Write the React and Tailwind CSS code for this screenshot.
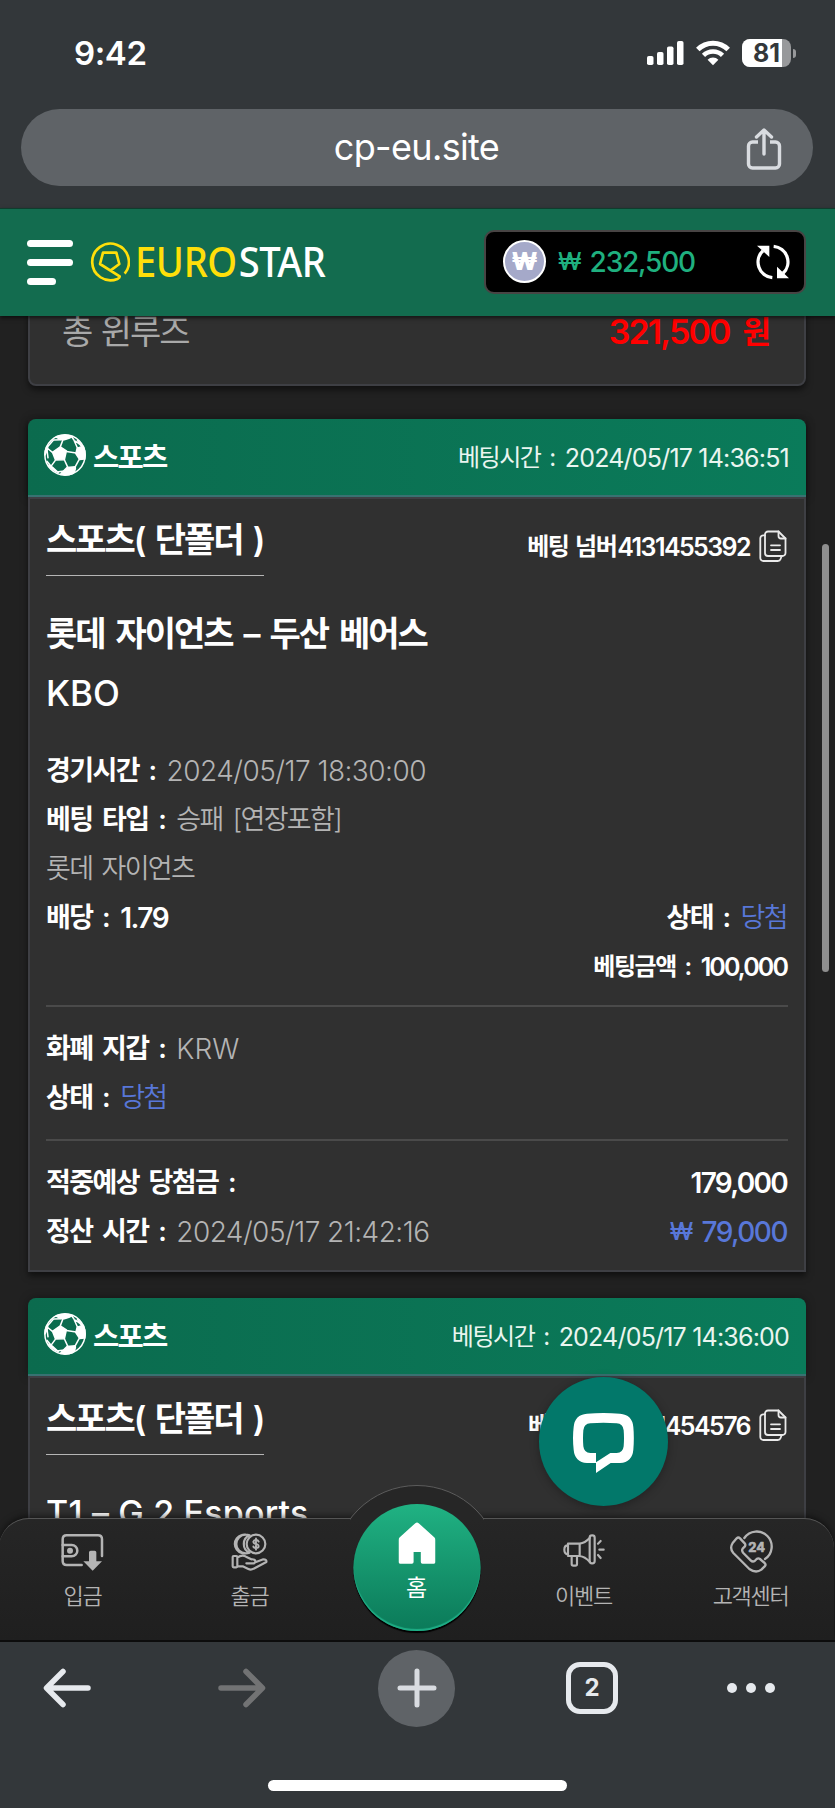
import React from 'react';

function SoccerBall() {
  return (
    <svg className="size-[42px] shrink-0" viewBox="0 0 124 124" fill="none" stroke="#fff" strokeWidth="4.5" strokeLinejoin="round">
      <circle cx="62" cy="62" r="59.5" />
      <path fill="#fff" d="M48 38 66 50 60 76 34 77 25 54Z" />
      <path fill="#fff" d="M36 9 Q60 -1 84 8 Q72 15 60 17 Q48 18 36 9Z" />
      <path fill="#fff" d="M98 42 116 36 Q124 56 120 74 L105 75 94 58Z" />
      <path fill="#fff" d="M68 99 92 97 Q95 108 84 117 Q66 124 50 117Z" />
      <path fill="#fff" d="M8 38 Q3 50 3 62 L9 48 12 34Z" />
      <path fill="#fff" d="M14 92 25 98 42 114 Q24 106 14 92Z" />
      <path d="M48 38 56 17M66 52 95 56M60 76 71 100M34 77 21 95M25 54 10 42M82 9 88 17 99 42M104 75 92 97M98 18 115 38M8 40 12 72 M92 20 Q108 30 116 42M40 112 Q56 108 70 112M52 17 28 18 12 36M21 95 8 80" />
    </svg>
  );
}

function CopyIcon() {
  return (
    <svg className="h-[32px] w-[28px] shrink-0" viewBox="0 0 28 32" fill="none" stroke="#eaeaea" strokeWidth="1.8" strokeLinecap="round" strokeLinejoin="round">
      <path d="M9 1.5h10.5l7 7V23a3 3 0 0 1-3 3H9a3 3 0 0 1-3-3V4.5a3 3 0 0 1 3-3Z" />
      <path d="M19.5 1.5V6a2.5 2.5 0 0 0 2.500 2.500h4.500M12 15.300h9M12 20h9" />
      <path d="M6 5.300H4.300a3 3 0 0 0-3 3V28a3 3 0 0 0 3 3h14.500a3 3 0 0 0 2.800-2L22.500 26.500" />
    </svg>
  );
}

function StatusBar() {
  return (
    <div className="flex h-[109px] items-start justify-between pt-[34px] pr-[39px] pl-[74px]">
      <span className="text-[33px] leading-[38px] font-semibold tracking-[-0.4px]">9:42</span>
      <div className="mt-[1px] flex h-[36px] items-center">
        <svg className="h-[24px] w-[37px]" viewBox="0 0 37 24" fill="#fff">
          <rect x="0" y="15" width="6.5" height="9" rx="1.800" />
          <rect x="10" y="11" width="6.500" height="13" rx="1.800" />
          <rect x="20" y="5.500" width="6.500" height="18.500" rx="1.800" />
          <rect x="30" y="0" width="6.500" height="24" rx="1.800" />
        </svg>
        <svg className="ml-[12px] h-[26px] w-[34px]" viewBox="0 0 34 26" fill="none" stroke="#fff" strokeWidth="5">
          <path d="M1.800 9.500a21.500 21.500 0 0 1 30.400 0" />
          <path d="M7.500 15.400a13.500 13.500 0 0 1 19 0" strokeWidth="4.600" />
          <path d="M17 25.300 11.600 19.800a7.700 7.700 0 0 1 10.800 0Z" fill="#fff" stroke="none" />
        </svg>
        <div className="ml-[12px] flex h-[28px] w-[49px] overflow-hidden rounded-[8px] bg-[#98999b]">
          <span className="flex w-[40px] items-center justify-end bg-white pr-[2px] text-[25px] leading-none font-bold text-[#33373a]">81</span>
        </div>
        <div className="ml-[2px] h-[9px] w-[3px] rounded-r-full bg-[#98999b]" />
      </div>
    </div>
  );
}

function AddressBar() {
  return (
    <div className="mr-[22px] ml-[21px] flex h-[77px] items-center rounded-full bg-[#5f6367] pr-[31px] pl-[66px]">
      <span className="flex-1 pb-[2px] text-center text-[36px] leading-[44px] font-normal tracking-[-0.66px]">cp-eu.site</span>
      <svg className="mt-[2px] h-[42px] w-[36px]" viewBox="0 0 36 42" fill="none" stroke="#d9dce0" strokeWidth="3.400" strokeLinecap="round" strokeLinejoin="round">
        <path d="M12 14H6.500a4 4 0 0 0-4 4v18a4 4 0 0 0 4 4h23a4 4 0 0 0 4-4V18a4 4 0 0 0-4-4H24" strokeLinecap="butt" />
        <path d="M18 26V2.500M10.500 9 18 2l7.500 7" />
      </svg>
    </div>
  );
}

function SiteHeader() {
  return (
    <header className="relative z-10 flex h-[108px] items-center border-t border-[#0f3d2d] bg-[#136c4f] pr-[29px] pb-[2px] pl-[27px] shadow-[0_2px_4px_rgba(0,0,0,0.6)]">
      <div className="flex flex-col gap-[12px] pt-[1px]">
        <div className="h-[7px] w-[46px] rounded-full bg-white" />
        <div className="h-[7px] w-[46px] rounded-full bg-white" />
        <div className="h-[7px] w-[29px] rounded-full bg-white" />
      </div>
      <svg className="ml-[17px] h-[40px] w-[40px]" viewBox="0 0 120 120" fill="none" stroke="#ffdf0a" strokeWidth="8" strokeLinejoin="round">
        <path d="M104 95 A55 55 0 1 0 82 111 Q90 107 89 103 L30 66 39 32 79 32 88 66 62 85" />
      </svg>
      <span className="ml-[5px] flex origin-left scale-x-[0.93] pb-[1px] font-['Noto_Sans',sans-serif] text-[41px] leading-[48px] font-medium text-white">
        <span className="tracking-[-0.4px] text-[#ffdf0a]">EURO</span>
        <span className="ml-[2px] tracking-[-0.6px]">STAR</span>
      </span>
      <div className="ml-auto flex h-[64px] w-[322px] shrink-0 items-center rounded-[10px] border-2 border-[#484444] bg-black pr-[13px] pl-[17px]">
        <div className="flex size-[43px] items-center justify-center rounded-full border-2 border-white bg-[#a5a9c9] text-[24px] font-black">₩</div>
        <span className="ml-[12px] text-[24px] font-medium text-[#1fb07f]">₩</span>
        <span className="ml-[8px] text-[28px] font-medium tracking-[-1.18px] text-[#1fb07f]">232,500</span>
        <svg className="ml-auto h-[36px] w-[36px]" viewBox="0 0 108 108" fill="none" stroke="#fff" strokeWidth="10">
          <path d="M52 101 A47 47 0 0 1 24 20" />
          <path d="M56 7 A47 47 0 0 1 84 88" />
          <path d="M6 5h37v34Z M102 103H66V68Z" fill="#fff" stroke="none" />
        </svg>
      </div>
    </header>
  );
}

function CardHeader({ time }) {
  return (
    <div className="flex h-[78px] items-center rounded-t-[8px] border-b-2 border-[#387272] bg-linear-to-r from-[#0b6b4e] to-[#0a7b5a] pr-[17px] pl-[16px] shadow-[0_0_10px_rgba(0,0,0,0.35)]">
      <div className="pb-[4px]"><SoccerBall /></div>
      <span className="ml-[7px] pt-[1px] text-[28.5px] leading-[40px] font-semibold tracking-[-1.7px]">스포츠</span>
      <span className="ml-auto pt-[1px] text-[24px] leading-[40px] font-normal tracking-[-1.44px] [word-spacing:3.5px] text-[#eaf5f0]">베팅시간 :</span>
      <span className="ml-[10px] pt-[1px] text-[25px] leading-[40px] font-normal tracking-[-0.8px] text-[#eaf5f0]">{time}</span>
    </div>
  );
}

function CardTitle({ number }) {
  return (
    <div className="flex items-start justify-between">
      <div className="h-[60px] w-[218px] border-b border-[#b5b5b5] text-[34px] leading-[48px] font-semibold tracking-[-2.04px] whitespace-nowrap [word-spacing:3.8px]">스포츠( 단폴더 )</div>
      <div className="flex h-[60px] items-center text-[25px] leading-[40px] font-semibold">
        <span className="pt-[1px] text-[24px] tracking-[-1.44px] [word-spacing:2px]">베팅 넘버</span>
        <span className="ml-[1px] pt-[1px] tracking-[-1.58px]">{number}</span>
        <div className="mr-[1px] ml-[9px]"><CopyIcon /></div>
      </div>
    </div>
  );
}

function Row({ children }) {
  return <div className="flex h-[49px] items-center justify-between leading-[40px]">{children}</div>;
}

function Pair({ children }) {
  return <div className="mr-[1px] flex items-center gap-[11px]">{children}</div>;
}

function Label({ children }) {
  return <span className="text-[27px] font-semibold tracking-[-1.62px] [word-spacing:4.5px]">{children}</span>;
}

function Value({ children }) {
  return <span className="text-[28px] font-[350] tracking-[-0.54px] text-[#b4b4b4]">{children}</span>;
}

function Won() {
  return <span className="text-[27px] font-[350] tracking-[-1.62px] text-[#5877d8]">당첨</span>;
}

function BetCard() {
  return (
    <section className="shadow-[0_4px_6px_rgba(0,0,0,0.5)]">
      <CardHeader time="2024/05/17 14:36:51" />
      <div className="h-[775px] border-2 border-[#3e3f44] bg-[#303030] px-[16px] pt-[17px]">
        <CardTitle number="4131455392" />
        <h2 className="mt-[28px] h-[60px] text-[34px] leading-[60px] font-semibold tracking-[-2.04px] [word-spacing:4.5px]">롯데 자이언츠 – 두산 베어스</h2>
        <h3 className="h-[60px] text-[35px] leading-[59px] font-medium">KBO</h3>
        <div className="mt-[22px]">
          <Row><Pair><Label>경기시간 :</Label><Value>2024/05/17 18:30:00</Value></Pair></Row>
          <Row><Pair><Label>베팅 타입 :</Label><span className="text-[27px] font-[350] tracking-[-1.62px] [word-spacing:4px] text-[#b4b4b4]">승패 [연장포함]</span></Pair></Row>
          <Row><span className="text-[27px] font-[350] tracking-[-1.62px] [word-spacing:3px] text-[#b4b4b4]">롯데 자이언츠</span></Row>
          <Row>
            <Pair><Label>배당 :</Label><span className="text-[28px] font-semibold tracking-[-1.5px]">1.79</span></Pair>
            <Pair><Label>상태 :</Label><Won /></Pair>
          </Row>
          <div className="mr-[1px] flex h-[49px] items-center justify-end leading-[40px] font-semibold">
            <span className="text-[24px] tracking-[-1.44px] [word-spacing:4px]">베팅금액 :</span>
            <span className="ml-[10px] text-[25px] tracking-[-1.9px]">100,000</span>
          </div>
        </div>
        <div className="mt-[14px] h-[2px] bg-[#4a4a4a]" />
        <div className="mt-[17px]">
          <Row><Pair><Label>화폐 지갑 :</Label><span className="text-[28px] font-[350] tracking-[0.1px] text-[#b4b4b4]">KRW</span></Pair></Row>
          <Row><Pair><Label>상태 :</Label><Won /></Pair></Row>
        </div>
        <div className="mt-[17px] h-[2px] bg-[#4a4a4a]" />
        <div className="mt-[17px]">
          <Row>
            <Label>적중예상 당첨금 :</Label>
            <span className="mr-[1px] text-[28px] font-semibold tracking-[-1.7px]">179,000</span>
          </Row>
          <Row>
            <Pair><Label>정산 시간 :</Label><Value>2024/05/17 21:42:16</Value></Pair>
            <div className="mr-[1px] flex items-center font-medium text-[#5877d8]">
              <span className="text-[24px]">₩</span>
              <span className="ml-[8px] text-[28px] tracking-[-1.5px]">79,000</span>
            </div>
          </Row>
        </div>
      </div>
    </section>
  );
}

function NextBetCard() {
  return (
    <section className="mt-[26px]">
      <CardHeader time="2024/05/17 14:36:00" />
      <div className="h-[400px] border-2 border-[#3e3f44] bg-[#303030] px-[16px] pt-[17px]">
        <CardTitle number="4131454576" />
        <h2 className="mt-[28px] h-[60px] text-[34px] leading-[60px] font-medium tracking-[0.18px]">T1 – G 2 Esports</h2>
      </div>
    </section>
  );
}

function DepositIcon() {
  return (
    <svg className="h-[38px] w-[43px]" viewBox="0 0 129 114" fill="none" stroke="#b4b4b4" strokeWidth="7.5" strokeLinecap="round" strokeLinejoin="round">
      <path d="M62 96H17Q5 96 5 84V19Q5 7 17 7H111Q123 7 123 19V69" />
      <path d="M5 36h27a17 17 0 0 1 0 34H5" />
      <circle cx="27" cy="53" r="9" fill="#b4b4b4" stroke="none" />
      <path d="M84 58q0-5 5-5h12q5 0 5 5v27h17L95 113 67 85h17Z" fill="#b4b4b4" stroke="none" />
    </svg>
  );
}

function WithdrawIcon() {
  return (
    <svg className="h-[38px] w-[38px]" viewBox="0 0 114 114" fill="none" stroke="#b4b4b4" strokeWidth="6.5" strokeLinecap="round" strokeLinejoin="round">
      <circle cx="75" cy="33" r="28" />
      <path d="M56 7A28 28 0 0 0 56 59M44 5A28 28 0 0 0 44 61M56 7Q50 5 44 5Q38 4 32 6A28 28 0 0 0 32 60Q38 62 44 61Q50 61 56 59" />
      <path d="M83 26q-2-5-8-5t-8 5q0 5 8 6.500t8 7.500q0 5-8 5t-8-5M75 16v34" strokeWidth="5.500" />
      <path d="M5 72q0-3 3-3h8q3 0 3 3v28q0 3-3 3H8q-3 0-3-3ZM19 74q14-10 26-3l16 8q12-1 12 6t-10 6H46M73 88l24-9q11 0 9 8L68 107q-8 5-16 1L35 100H19" />
    </svg>
  );
}

function EventIcon() {
  return (
    <svg className="h-[38px] w-[44px]" viewBox="0 0 132 114" fill="none" stroke="#b4b4b4" strokeWidth="6.5" strokeLinecap="round" strokeLinejoin="round">
      <path d="M18 32h35v37H18ZM18 37Q7 37 7 50t11 14M53 32Q69 30 83 15M53 69Q69 71 83 86" />
      <rect x="83" y="7" width="15" height="84" rx="7" />
      <path d="M29 69v24q0 5 5 5h6q5 0 5-5V69M108 32l8-8M112 50h13M108 66l8 9" />
    </svg>
  );
}

function SupportIcon() {
  return (
    <svg className="h-[42px] w-[42px] overflow-visible" viewBox="0 0 126 126" fill="none" stroke="#b4b4b4" strokeWidth="7" strokeLinecap="round" strokeLinejoin="round">
      <path d="M43 21A45 45 0 1 1 105 84" />
      <path d="M20 22 8 36Q-2 52 10 66L58 114Q78 128 94 116L104 106Q109 101 104 96L90 84Q85 80 80 84L74 90Q68 94 62 88L40 66Q34 58 38 53L44 47Q48 42 44 37L30 22Q25 17 20 22Z" />
      <text x="80" y="62" textAnchor="middle" fill="#b4b4b4" stroke="#b4b4b4" strokeWidth="2" fontSize="39" fontWeight="700" fontFamily="Inter, sans-serif" textLength="50">24</text>
    </svg>
  );
}

function NavItem({ icon, label }) {
  return (
    <div className="flex flex-col items-center pt-[12px]">
      <div className="flex h-[42px] items-center">{icon}</div>
      <span className="mt-[9px] text-[22px] leading-[28px] font-[350] tracking-[-1.32px] text-[#b4b4b4]">{label}</span>
    </div>
  );
}

function BottomNav() {
  return (
    <nav className="absolute right-[2px] bottom-0 left-0 h-[122px]">
      <div className="-mx-[1px] grid h-full grid-cols-5 rounded-t-[30px] border-t border-[#555] bg-linear-to-b from-[#262626] to-[#1f1f1f] shadow-[0_-2px_6px_rgba(0,0,0,0.5)]">
        <NavItem icon={<DepositIcon />} label="입금" />
        <NavItem icon={<WithdrawIcon />} label="출금" />
        <div />
        <NavItem icon={<EventIcon />} label="이벤트" />
        <NavItem icon={<SupportIcon />} label="고객센터" />
      </div>
      <div className="absolute top-[-33px] left-1/2 h-[35px] w-[134px] -translate-x-1/2 overflow-hidden">
        <div className="ml-[-17px] size-[168px] rounded-full border border-[#5c5c5c] bg-[#262626]" />
      </div>
      <div className="absolute top-[-14px] left-1/2 flex size-[127px] -translate-x-1/2 flex-col items-center rounded-full bg-linear-to-b from-[#20b283] to-[#0b7a59] pt-[18px] shadow-[0_2px_1px_#000,inset_0_-2px_1px_#1fae86]">
        <svg className="h-[42px] w-[37px]" viewBox="0 0 37 42" fill="#fff">
          <path d="M16.800 1.200q1.700-1.600 3.400 0L36 15.500q1 1 1 2.500V40q0 1.700-1.700 1.700H24q-1.700 0-1.700-1.700V30h-7.200V40q0 1.700-1.700 1.700H1.700Q0 41.700 0 40V18q0-1.500 1-2.500Z" />
        </svg>
        <span className="mt-[9px] text-[23px] leading-[30px] font-normal">홈</span>
      </div>
    </nav>
  );
}

function ChatButton() {
  return (
    <div className="absolute top-[1061px] left-[539px] flex size-[129px] items-center justify-center rounded-full bg-[#02786a] shadow-[0_2px_10px_rgba(0,0,0,0.3)]">
      <svg className="mt-[3px] h-[60px] w-[61px]" viewBox="0 0 183 180" fill="#fff" fillRule="evenodd">
        <path d="M42 2Q91-2 141 2Q178 5 181 42Q184 74 181 110Q178 147 141 150H113L69 180V150H42Q5 147 2 110Q-2 74 2 42Q5 5 42 2ZM52 31Q33 32 31 52Q29 76 31 100Q33 119 52 120H69V148L112 120H131Q150 119 152 100Q154 76 152 52Q150 32 131 31Q91 28 52 31Z" />
      </svg>
    </div>
  );
}

function BrowserToolbar() {
  return (
    <footer className="flex h-[168px] flex-col items-center border-t-2 border-[#0c0c0c] bg-[#33373a]">
      <div className="flex h-[92px] w-full items-center pl-[43px]">
        <svg className="h-[40px] w-[49px]" viewBox="0 0 49 40" fill="none" stroke="#e6e9ed" strokeWidth="5.500" strokeLinecap="round" strokeLinejoin="round">
          <path d="M45 20H4M20 3.500 3.500 20 20 36.500" />
        </svg>
        <svg className="ml-[125px] h-[40px] w-[49px]" viewBox="0 0 49 40" fill="none" stroke="#727374" strokeWidth="5.500" strokeLinecap="round" strokeLinejoin="round">
          <path d="M4 20h41M29 3.500 45.500 20 29 36.500" />
        </svg>
        <div className="ml-[112px] flex size-[77px] items-center justify-center rounded-full bg-[#5f6367]">
          <svg className="size-[40px]" viewBox="0 0 40 40" fill="none" stroke="#d9dce1" strokeWidth="5" strokeLinecap="round">
            <path d="M20 3v34M3 20h34" />
          </svg>
        </div>
        <div className="ml-[111px] flex size-[52px] items-center justify-center rounded-[14px] border-5 border-[#e6e9ed] text-[24px] leading-none font-bold text-[#e6e9ed]">2</div>
        <div className="ml-[109px] flex gap-[9px]">
          <div className="size-[10px] rounded-full bg-[#e6e9ed]" />
          <div className="size-[10px] rounded-full bg-[#e6e9ed]" />
          <div className="size-[10px] rounded-full bg-[#e6e9ed]" />
        </div>
      </div>
      <div className="mt-[46px] h-[11px] w-[299px] rounded-full bg-white" />
    </footer>
  );
}

export default function App() {
  return (
    <div className="flex h-[1808px] w-[835px] flex-col overflow-hidden bg-[#33373a] font-['Inter','Noto_Sans_CJK_KR',sans-serif] whitespace-nowrap text-white">
      <StatusBar />
      <AddressBar />
      <div className="h-[22px] shrink-0" />
      <SiteHeader />
      <main className="relative h-[1324px] shrink-0 overflow-hidden bg-[#212121] pr-[29px] pl-[28px]">
        <div className="-mt-[20px] flex h-[90px] items-start justify-between rounded-[8px] border-2 border-[#3e3f44] bg-[#303030] pr-[33px] pl-[32px] leading-[68px] shadow-[0_4px_6px_rgba(0,0,0,0.5)]">
          <span className="text-[34px] font-normal tracking-[-2.04px] [word-spacing:2px] text-[#a9a9a9]">총 윈루즈</span>
          <span className="flex font-semibold text-[#ff0000]">
            <span className="text-[34px] tracking-[-1.9px]">321,500</span>
            <span className="ml-[13px] text-[31px]">원</span>
          </span>
        </div>
        <div className="mt-[33px]">
          <BetCard />
          <NextBetCard />
        </div>
        <div className="absolute top-[228px] right-[6px] h-[428px] w-[7px] rounded-full bg-[#8f8f8f]" />
        <ChatButton />
        <BottomNav />
      </main>
      <BrowserToolbar />
    </div>
  );
}
